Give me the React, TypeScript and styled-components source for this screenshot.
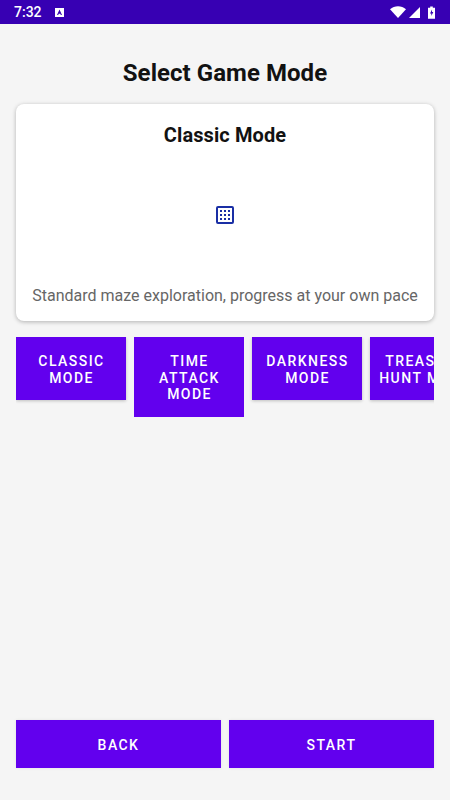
import styled, { createGlobalStyle } from "styled-components";

const Global = createGlobalStyle`
  html, body {
    margin: 0;
    padding: 0;
    background: #f5f5f5;
  }
  * {
    box-sizing: border-box;
  }
`;

const Screen = styled.div`
  width: 450px;
  height: 800px;
  display: flex;
  flex-direction: column;
  overflow: hidden;
  background: #f5f5f5;
  font-family: Roboto, "Liberation Sans", sans-serif;
`;

const StatusBar = styled.div`
  height: 24px;
  flex: none;
  display: flex;
  align-items: center;
  padding: 0 15px 0 14px;
  background: #3700b3;
  color: #fff;
`;

const Clock = styled.span`
  font-size: 14px;
  font-weight: 500;
  line-height: 24px;
`;

const NotifyIcon = styled.svg`
  width: 9px;
  height: 9px;
  margin-left: 13px;
`;

const StatusIcons = styled.div`
  margin-left: auto;
  display: flex;
  align-items: center;
`;

const WifiIcon = styled.svg`
  width: 16px;
  height: 12px;
  margin-right: 3px;
`;

const SignalIcon = styled.svg`
  width: 11px;
  height: 11px;
  margin-right: 8px;
`;

const BatteryIcon = styled.svg`
  width: 7px;
  height: 13px;
`;

const Main = styled.main`
  flex: 1;
  display: flex;
  flex-direction: column;
  padding: 32px 16px;
`;

const Title = styled.h1`
  margin: 0 0 15px;
  padding-top: 1px;
  height: 33px;
  font-size: 24px;
  line-height: 32px;
  font-weight: 700;
  letter-spacing: 0.05px;
  text-align: center;
  color: #121212;
`;

const Card = styled.section`
  height: 217px;
  padding: 16px;
  display: flex;
  flex-direction: column;
  align-items: center;
  background: #fff;
  border-radius: 8px;
  box-shadow: 0 1px 4px rgba(0, 0, 0, 0.28);
`;

const CardTitle = styled.h2`
  margin: 0;
  font-size: 20px;
  line-height: 30px;
  font-weight: 700;
  letter-spacing: 0.1px;
  color: #121212;
`;

const CardIcon = styled.svg`
  width: 24px;
  height: 24px;
  margin-top: 53px;
`;

const CardText = styled.p`
  margin: auto 0 -1px;
  font-size: 16px;
  line-height: 20px;
  white-space: nowrap;
  color: #666;
`;

const ModeRow = styled.div`
  display: flex;
  align-items: flex-start;
  gap: 8px;
  margin: 16px 0 0;
  padding-bottom: 4px;
  overflow: hidden;
`;

const Button = styled.button`
  border: 0;
  padding: 2px 0 0;
  background: #6200ee;
  color: #fff;
  font-family: inherit;
  font-size: 14px;
  font-weight: 500;
  line-height: 16.5px;
  letter-spacing: 1.45px;
  text-transform: uppercase;
`;

const ModeButton = styled(Button)<{ $lines: number }>`
  flex: none;
  width: 110px;
  height: ${(p) => (p.$lines > 2 ? 80 : 63)}px;
  padding: 2px 7.5px 0 8.5px;
  line-height: ${(p) => (p.$lines > 2 ? 16.5 : 17)}px;
  box-shadow: ${(p) => (p.$lines > 2 ? "none" : "0 1px 3px rgba(0, 0, 0, 0.22)")};
`;

const Footer = styled.div`
  margin-top: auto;
  display: grid;
  grid-template-columns: 1fr 1fr;
  gap: 8px;
`;

const FooterButton = styled(Button)`
  height: 48px;
  box-shadow: 0 0 3px rgba(0, 0, 0, 0.08);
`;

const modes = [
  { label: "Classic Mode", lines: 2 },
  { label: "Time Attack Mode", lines: 3 },
  { label: "Darkness Mode", lines: 2 },
  { label: "Treasure Hunt Mode", lines: 2 },
];

export default function App() {
  return (
    <Screen>
      <Global />
      <StatusBar>
        <Clock>7:32</Clock>
        <NotifyIcon viewBox="0 0 9 9">
          <rect width="9" height="9" fill="#fff" />
          <path d="M4.5 1.5 7 7H5.8L5.3 5.8H3.7L3.2 7H2z" fill="#3700b3" />
        </NotifyIcon>
        <StatusIcons>
          <WifiIcon viewBox="0 0 16 12">
            <path d="M0 3.2C4.5-.9 11.5-.9 16 3.2L8 12z" fill="#fff" />
          </WifiIcon>
          <SignalIcon viewBox="0 0 12 12">
            <path d="M12 0v12H0z" fill="#fff" />
          </SignalIcon>
          <BatteryIcon viewBox="0 0 8 14">
            <path d="M2.5 0h3v1.5H8V14H0V1.5h2.5z" fill="#fff" />
            <path d="M4.6 3.5 2.3 8h1.5v3l2.3-4.5H4.6z" fill="#3700b3" />
          </BatteryIcon>
        </StatusIcons>
      </StatusBar>
      <Main>
        <Title>Select Game Mode</Title>
        <Card>
          <CardTitle>Classic Mode</CardTitle>
          <CardIcon viewBox="0 0 24 24">
            <rect x="4" y="4" width="16" height="16" rx="1" fill="none" stroke="#1a2fa5" strokeWidth="2" />
            <path
              d="M7 7h2v2H7zM11 7h2v2h-2zM15 7h2v2h-2zM7 11h2v2H7zM11 11h2v2h-2zM15 11h2v2h-2zM7 15h2v2H7zM11 15h2v2h-2zM15 15h2v2h-2z"
              fill="#1a2fa5"
            />
          </CardIcon>
          <CardText>Standard maze exploration, progress at your own pace</CardText>
        </Card>
        <ModeRow>
          {modes.map((m) => (
            <ModeButton key={m.label} $lines={m.lines}>
              {m.label}
            </ModeButton>
          ))}
        </ModeRow>
        <Footer>
          <FooterButton>Back</FooterButton>
          <FooterButton>Start</FooterButton>
        </Footer>
      </Main>
    </Screen>
  );
}
